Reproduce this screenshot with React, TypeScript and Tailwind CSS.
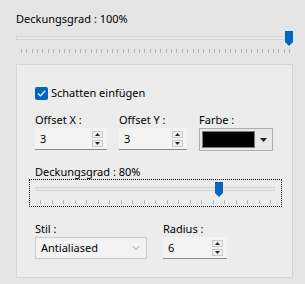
import { ChevronDown } from "lucide-react";

const bigTicks = Array.from({ length: 51 }, (_, i) => i);
const smallTicks = Array.from({ length: 21 }, (_, i) => i);

function Thumb({ className }: { className: string }) {
  return (
    <svg className={className} width="8" height="15" viewBox="0 0 8 15">
      <path d="M0 0H8V11L4 15L0 11Z" fill="#0067c0" />
    </svg>
  );
}

function Ticks({ count }: { count: number[] }) {
  return (
    <div className="flex justify-between h-[4px]">
      {count.map((i) => (
        <span key={i} className="w-px h-full bg-[#b4b4b4]" />
      ))}
    </div>
  );
}

function SpinButtons() {
  return (
    <div className="flex flex-col gap-[2px]">
      <div className="w-[11px] h-[7px] border border-[#c9c9c9] bg-[#f0f0f0] flex items-center justify-center">
        <svg width="5" height="3" viewBox="0 0 5 3">
          <path d="M0 3L2.5 0L5 3Z" fill="#222" />
        </svg>
      </div>
      <div className="w-[11px] h-[7px] border border-[#c9c9c9] bg-[#f0f0f0] flex items-center justify-center">
        <svg width="5" height="3" viewBox="0 0 5 3">
          <path d="M0 0L5 0L2.5 3Z" fill="#222" />
        </svg>
      </div>
    </div>
  );
}

function SpinBox({ value, className }: { value: string; className: string }) {
  return (
    <div
      className={`${className} h-[22px] bg-[#f3f3f3] border-b border-[#8a8a8a] flex items-center justify-between pl-[5px] pr-[4px]`}
    >
      <span>{value}</span>
      <SpinButtons />
    </div>
  );
}

export default function App() {
  return (
    <div className="w-[305px] h-[284px] bg-[#e4e4e4] pt-[12px] pl-[16px] pr-[12px] text-[11px] leading-[14px] text-black font-['Noto_Sans',sans-serif] overflow-hidden">
      <p>Deckungsgrad : 100%</p>

      <div className="mt-[10px] pr-[2px]">
        <div className="relative h-[4px] border border-[#d3d3d3] bg-[#e9e9e9]">
          <Thumb className="absolute right-[-3px] top-[-6px]" />
        </div>
        <div className="mt-[9px] pl-[5px] pr-[1px]">
          <Ticks count={bigTicks} />
        </div>
      </div>

      <div className="mt-[11px] w-[277px] h-[214px] border border-[#d6d6d6] bg-[#ececec] pl-[18px] pt-[21px]">
        <label className="flex items-center gap-[3px]">
          <span className="w-[13px] h-[13px] rounded-[2px] bg-[#0067c0] flex items-center justify-center">
            <svg width="9" height="7" viewBox="0 0 9 7">
              <path d="M1 3.5L3.3 5.8L8 1" stroke="white" strokeWidth="1.2" fill="none" />
            </svg>
          </span>
          <span>Schatten einfügen</span>
        </label>

        <div className="mt-[13px] flex gap-[12px]">
          <div className="flex flex-col gap-[1px]">
            <span>Offset X :</span>
            <SpinBox value="3" className="w-[72px]" />
          </div>
          <div className="flex flex-col gap-[1px]">
            <span>Offset Y :</span>
            <SpinBox value="3" className="w-[68px]" />
          </div>
          <div className="flex flex-col gap-[1px]">
            <span>Farbe :</span>
            <div className="w-[74px] h-[23px] border border-[#adadad] bg-[#e8e8e8] flex items-center p-[2px] gap-[1px]">
              <div className="flex-1 h-full bg-black border border-[#7a7a7a]" />
              <div className="w-[14px] h-full flex items-center justify-center">
                <svg width="7" height="4" viewBox="0 0 7 4">
                  <path d="M0 0H7L3.5 4Z" fill="#222" />
                </svg>
              </div>
            </div>
          </div>
        </div>

        <p className="mt-[14px]">Deckungsgrad : 80%</p>
        <div className="ml-[-6px] w-[253px] h-[28px] border border-dotted border-black pt-[7px] pl-[6px] pr-[6px]">
          <div className="relative h-[4px] border border-[#d3d3d3] bg-[#e9e9e9]">
            <Thumb className="absolute left-[178px] top-[-6px]" />
          </div>
          <div className="mt-[9px] pl-[4px] pr-[4px]">
            <Ticks count={smallTicks} />
          </div>
        </div>

        <div className="mt-[15px] flex gap-[16px]">
          <div className="flex flex-col gap-[1px]">
            <span>Stil :</span>
            <div className="w-[112px] h-[22px] border border-[#cccccc] bg-[#f3f3f3] flex items-center justify-between pl-[5px] pr-[4px]">
              <span>Antialiased</span>
              <ChevronDown size={12} strokeWidth={1.2} color="#666" />
            </div>
          </div>
          <div className="flex flex-col gap-[1px]">
            <span>Radius :</span>
            <SpinBox value="6" className="w-[64px]" />
          </div>
        </div>
      </div>
    </div>
  );
}
